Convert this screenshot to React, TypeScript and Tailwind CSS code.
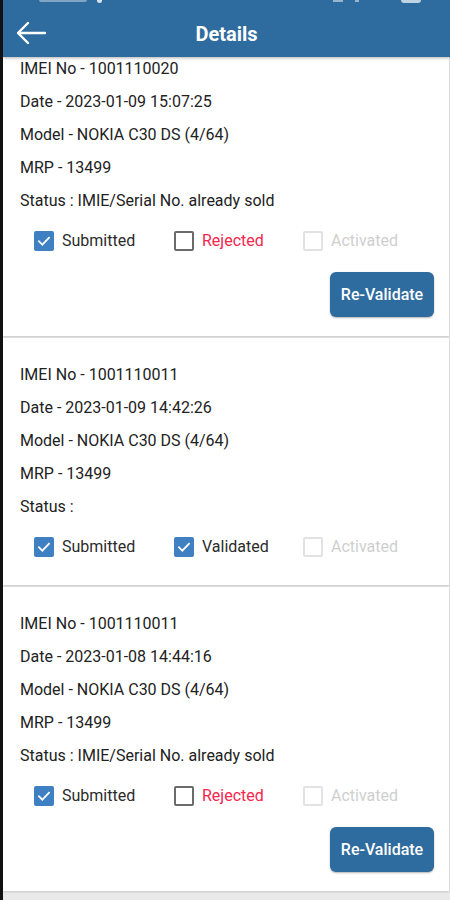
import React from 'react'

type Flag = 'checked' | 'empty' | 'disabled'

interface Entry {
  imei: string
  date: string
  status: string
  second: { label: string; state: Flag; tone: 'red' | 'dark' }
  revalidate: boolean
}

const ENTRIES: Entry[] = [
  {
    imei: '1001110020',
    date: '2023-01-09 15:07:25',
    status: 'IMIE/Serial No. already sold',
    second: { label: 'Rejected', state: 'empty', tone: 'red' },
    revalidate: true,
  },
  {
    imei: '1001110011',
    date: '2023-01-09 14:42:26',
    status: '',
    second: { label: 'Validated', state: 'checked', tone: 'dark' },
    revalidate: false,
  },
  {
    imei: '1001110011',
    date: '2023-01-08 14:44:16',
    status: 'IMIE/Serial No. already sold',
    second: { label: 'Rejected', state: 'empty', tone: 'red' },
    revalidate: true,
  },
]

function Box({ state }: { state: Flag }) {
  if (state === 'checked') {
    return (
      <span className="flex h-[20px] w-[20px] items-center justify-center rounded-[2px] bg-[#3f80c3]">
        <svg width="16" height="16" viewBox="0 0 24 24" fill="none">
          <path d="M4.5 12.5l5 5L19.5 7" stroke="white" strokeWidth="2.6" strokeLinecap="square" />
        </svg>
      </span>
    )
  }
  return (
    <span
      className={`h-[20px] w-[20px] rounded-[2px] border-2 ${
        state === 'empty' ? 'border-[#6b6b6b]' : 'border-[#e2e2e2]'
      }`}
    />
  )
}

function Check({ state, label, tone }: { state: Flag; label: string; tone: 'red' | 'dark' | 'muted' }) {
  const color = tone === 'red' ? 'text-[#f4264e]' : tone === 'muted' ? 'text-[#cfcfcf]' : 'text-[#2b2b2b]'
  return (
    <div className="flex items-center gap-[8px]">
      <Box state={state} />
      <span className={`text-[16px] ${color}`}>{label}</span>
    </div>
  )
}

function Card({ e }: { e: Entry }) {
  return (
    <div className={`bg-white pt-[20px] pl-[17px] pr-[15px] shadow-[0_1px_2px_rgba(0,0,0,0.15)] ${e.revalidate ? 'pb-[19px]' : 'pb-[25px]'}`}>
      <div className="text-[16px] leading-[33px] text-[#222]">
        <div>IMEI No - {e.imei}</div>
        <div>Date - {e.date}</div>
        <div>Model - NOKIA C30 DS (4/64)</div>
        <div>MRP - 13499</div>
        <div>Status : {e.status}</div>
      </div>
      <div className="mt-[11px] flex h-[26px] items-center pl-[14px]">
        <div className="w-[140px]">
          <Check state="checked" label="Submitted" tone="dark" />
        </div>
        <div className="w-[129px]">
          <Check state={e.second.state} label={e.second.label} tone={e.second.tone} />
        </div>
        <Check state="disabled" label="Activated" tone="muted" />
      </div>
      {e.revalidate && (
        <div className="mt-[18px] flex justify-end">
          <button className="h-[45px] w-[104px] rounded-[6px] bg-[#2e6b9e] text-[16px] font-medium text-white shadow-[0_1px_2px_rgba(0,0,0,0.3)]">
            Re-Validate
          </button>
        </div>
      )}
    </div>
  )
}

export default function App() {
  return (
    <div
      className="flex h-[900px] w-[450px] flex-col overflow-hidden border-l-[3px] border-[#111] bg-[#e9e9e9]"
      style={{ fontFamily: 'Roboto, "Liberation Sans", sans-serif' }}
    >
      <header className="relative flex h-[57px] shrink-0 items-center bg-[#2e6b9e] shadow-[0_1px_3px_rgba(0,0,0,0.3)]">
        {/* clipped status bar remnants */}
        <span className="absolute top-0 left-[36px] h-[2px] w-[48px] rounded-b bg-white/40" />
        <span className="absolute top-0 left-[94px] h-[3px] w-[5px] rounded-b bg-white/80" />
        <span className="absolute top-0 left-[330px] h-[2px] w-[10px] bg-white/50" />
        <span className="absolute top-0 left-[352px] h-[2px] w-[4px] bg-white/50" />
        <span className="absolute top-0 left-[398px] h-[3px] w-[20px] rounded-b bg-white/70" />
        <button className="absolute left-[12px] top-[20px] text-white">
          <svg width="32" height="26" viewBox="0 0 32 26" fill="none">
            <path d="M30 13H4M13 3L3 13l10 10" stroke="white" strokeWidth="2.4" strokeLinecap="round" strokeLinejoin="round" />
          </svg>
        </button>
        <h1 className="mt-[11px] flex-1 text-center text-[20px] font-bold text-white">Details</h1>
      </header>
      <div className="flex-1 overflow-hidden">
        <div className="-mt-[25px] flex flex-col gap-[2px] border-r border-[#e4e4e4]">
          {ENTRIES.map((e, i) => (
            <Card key={i} e={e} />
          ))}
        </div>
      </div>
    </div>
  )
}
